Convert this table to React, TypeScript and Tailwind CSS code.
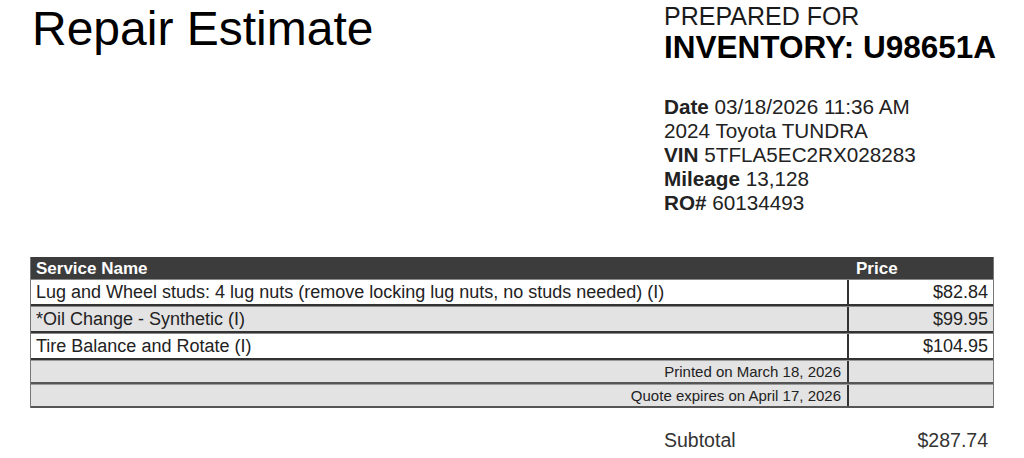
import React from "react";

type Line = { name: string; price: string };

const lines: Line[] = [
  {
    name: "Lug and Wheel studs: 4 lug nuts (remove locking lug nuts, no studs needed) (I)",
    price: "$82.84",
  },
  { name: "*Oil Change - Synthetic (I)", price: "$99.95" },
  { name: "Tire Balance and Rotate (I)", price: "$104.95" },
];

const notes = ["Printed on March 18, 2026", "Quote expires on April 17, 2026"];

const InfoRow: React.FC<{ label?: string; value: string }> = ({ label, value }) => (
  <div className="whitespace-nowrap">
    {label && <span className="font-bold">{label} </span>}
    {value}
  </div>
);

const App: React.FC = () => {
  return (
    <div className="w-[1024px] h-[458px] overflow-hidden bg-white px-[30px] text-[#1a1a1a] font-['Liberation_Sans',Arial,sans-serif]">
      {/* header */}
      <div className="flex justify-between">
        <h1 className="pt-[5px] pl-[2px] text-[48px] leading-none text-black whitespace-nowrap">
          Repair Estimate
        </h1>
        <div className="w-[330px] pt-[2px]">
          <div className="text-[25px] leading-[28px] whitespace-nowrap">PREPARED FOR</div>
          <div className="text-[31.5px] leading-[35px] font-bold text-black whitespace-nowrap">
            INVENTORY: U98651A
          </div>
          <div className="mt-[30px] text-[20.7px] leading-[24px] text-[#222]">
            <InfoRow label="Date" value="03/18/2026 11:36 AM" />
            <InfoRow value="2024 Toyota TUNDRA" />
            <InfoRow label="VIN" value="5TFLA5EC2RX028283" />
            <InfoRow label="Mileage" value="13,128" />
            <InfoRow label="RO#" value="60134493" />
          </div>
        </div>
      </div>

      {/* services table */}
      <div className="mt-[42px] border-l border-r border-[#777] text-[18px] text-[#222]">
        <div className="grid grid-cols-[1fr_144px] h-[22px] items-center bg-[#3c3c3c] text-white font-bold text-[17px] leading-none">
          <div className="pl-[5px]">Service Name</div>
          <div className="pl-[7px]">Price</div>
        </div>
        {lines.map((l, i) => (
          <div
            key={l.name}
            className={`grid grid-cols-[1fr_144px] h-[27px] border-t border-b-2 border-t-[#888] border-b-[#333] ${
              i % 2 === 1 ? "bg-[#e3e3e3]" : "bg-white"
            }`}
          >
            <div className="flex items-center pl-[5px] border-r-2 border-[#333] whitespace-nowrap leading-none">
              {l.name}
            </div>
            <div className="flex items-center justify-end pr-[5px] leading-none">{l.price}</div>
          </div>
        ))}
        {notes.map((n) => (
          <div
            key={n}
            className="grid grid-cols-[1fr_144px] h-[24px] bg-[#e3e3e3] border-t border-b-2 border-t-[#999] border-b-[#555]"
          >
            <div className="flex items-center justify-end pr-[6px] border-r-2 border-[#333] text-[15px] leading-none">
              {n}
            </div>
            <div />
          </div>
        ))}
      </div>

      {/* totals */}
      <div className="mt-[20px] ml-[634px] flex justify-between text-[19.5px] leading-[24px] text-[#333]">
        <span>Subtotal</span>
        <span className="pr-[6px]">$287.74</span>
      </div>
    </div>
  );
};

export default App;
